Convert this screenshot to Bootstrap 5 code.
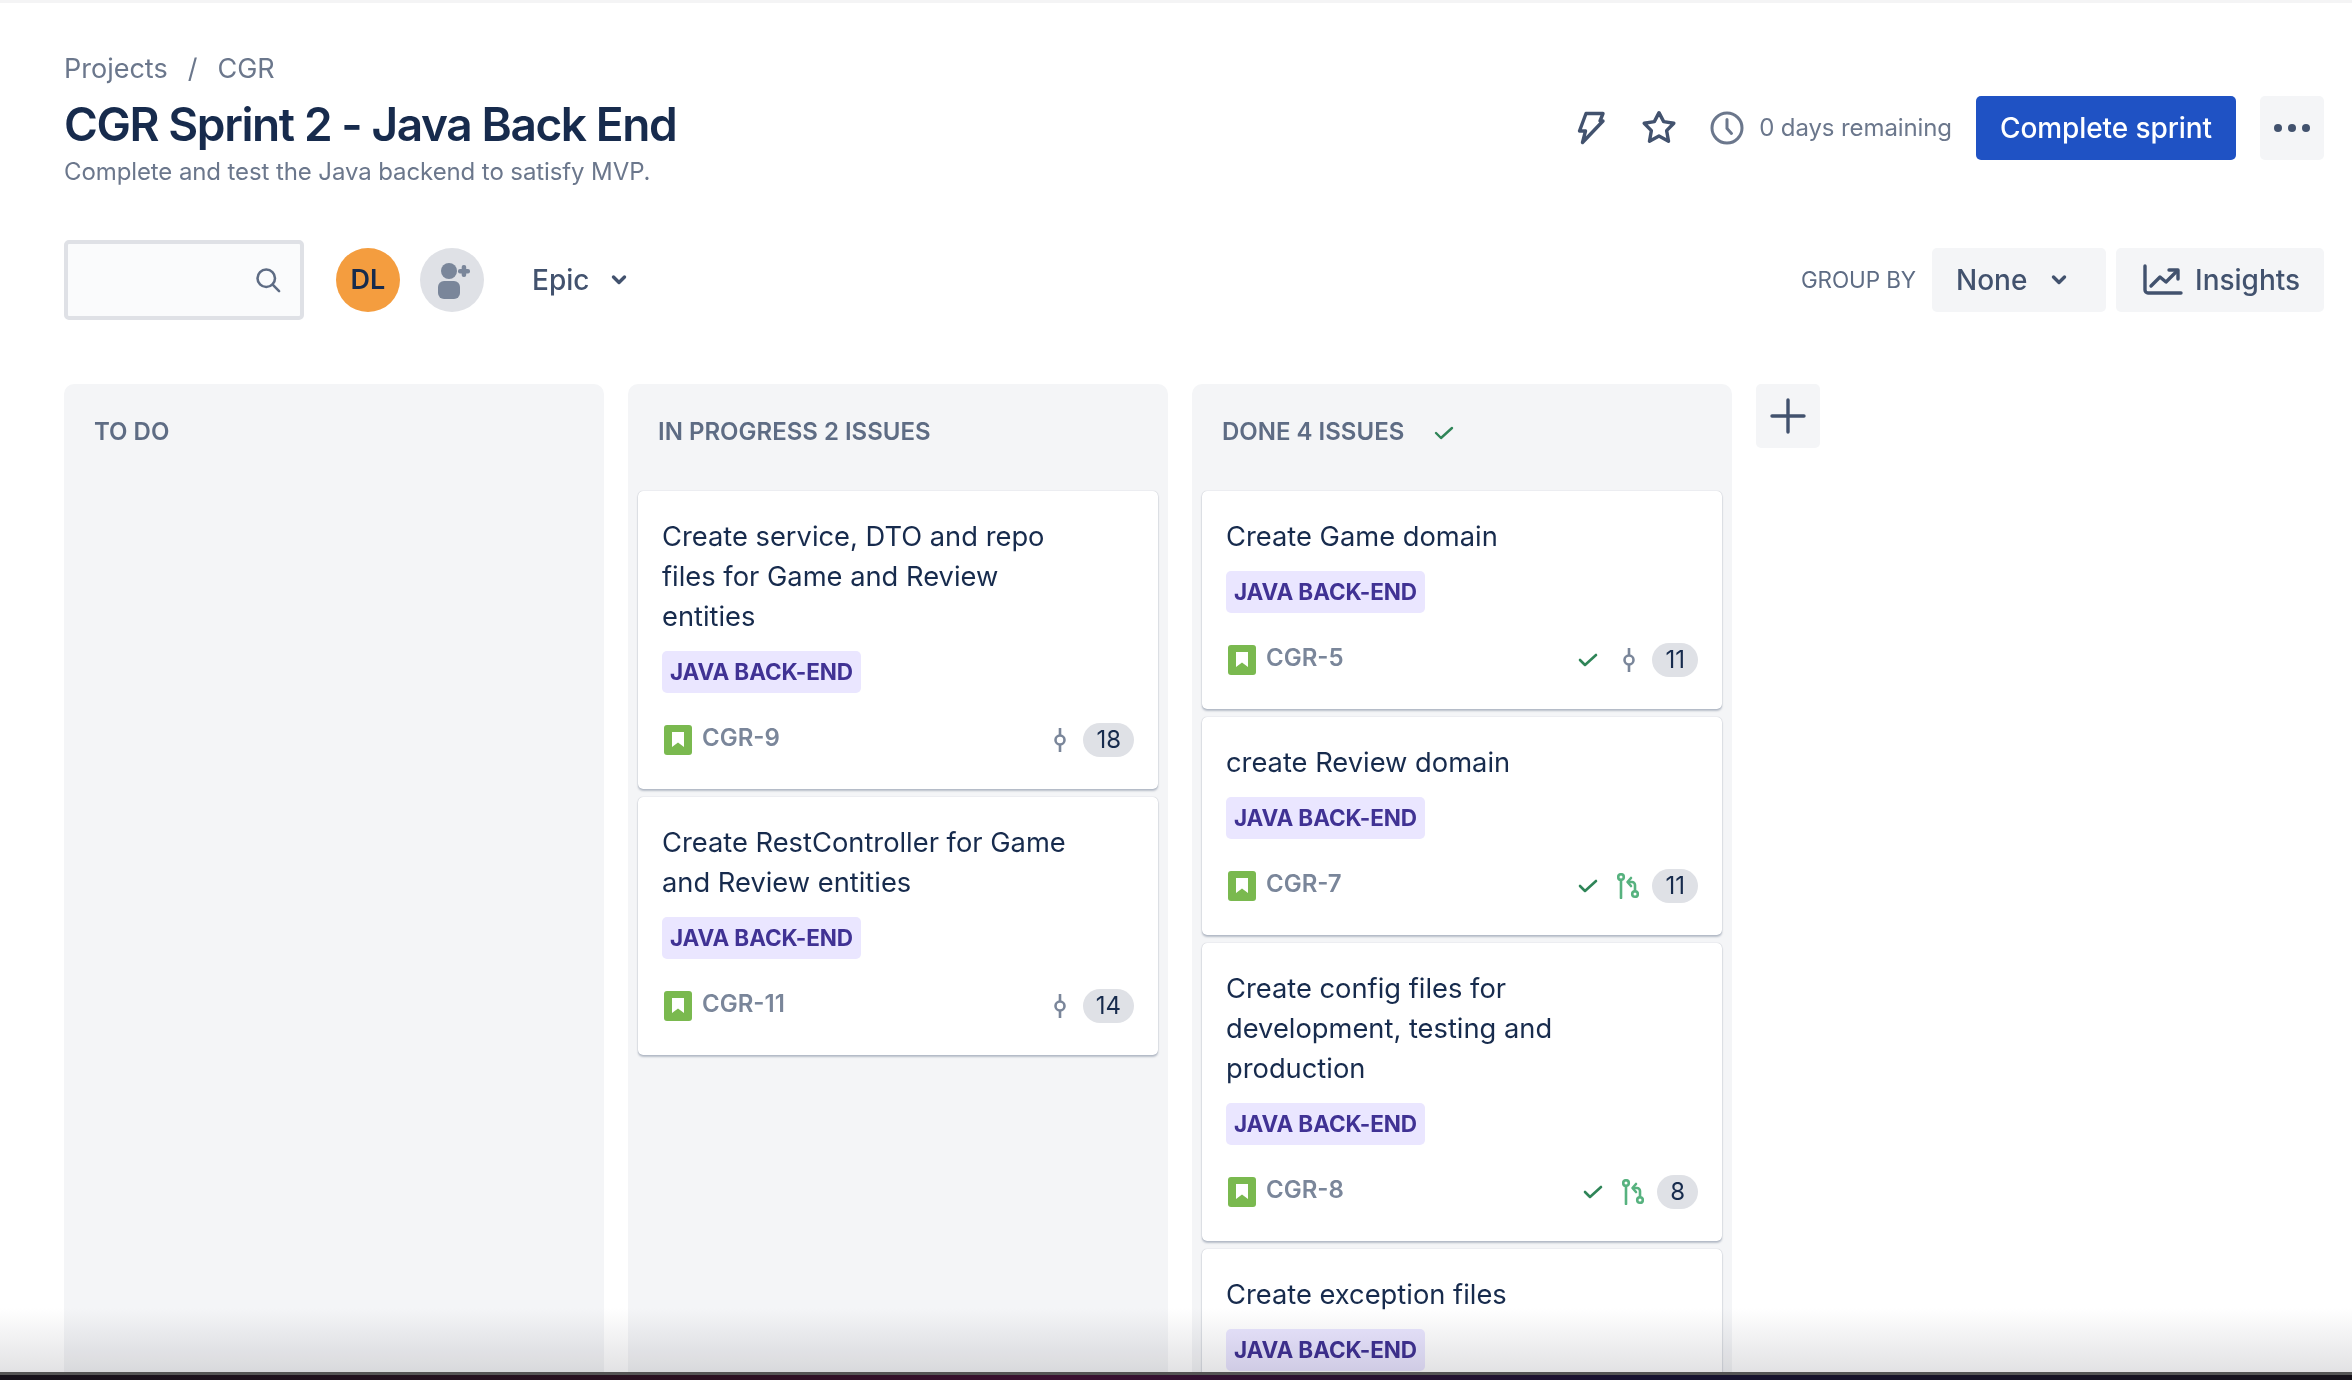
<!DOCTYPE html>
<html lang="en">
<head>
    <meta charset="UTF-8">
    <title>CGR Sprint 2 - Java Back End</title>
    <link href="https://cdn.jsdelivr.net/npm/bootstrap@5.3.3/dist/css/bootstrap.min.css" rel="stylesheet">
    <style>
        html, body { height: 100%; overflow: hidden; }
        body { font-family: Inter, "Liberation Sans", sans-serif; color: #172b4d; background: #fff; }
        .page-wrap { height: 1380px; padding: 3px 28px 0 64px; overflow: hidden; }
        .top-strip { position: absolute; top: 0; left: 0; right: 0; height: 3px; background: #f4f4f5; }
        .crumbs { font-size: 27px; line-height: 36px; color: #6b778c; margin-top: 48px; }
        .crumbs span { margin: 0 20px; }
        .title-row { height: 63px; margin-top: 7px; }
        .sprint-title { font-size: 46px; line-height: 60px; font-weight: 600; letter-spacing: -1.4px; margin: 0; color: #172b4d; }
        .sprint-goal { font-size: 24px; line-height: 30px; color: #6b778c; letter-spacing: -.1px; }
        .head-actions { margin-top: -91px; height: 64px; }
        .head-icons { gap: 32px; }
        .days-left { font-size: 24px; color: #6b778c; margin-left: 14px; margin-right: 24px; letter-spacing: -.1px; }
        .btn-sprint { background: #1f52c4; color: #fff; font-size: 28px; font-weight: 500; height: 64px; width: 260px; border: 0; border-radius: 5px; padding: 0; letter-spacing: -.1px; }
        .btn-grey { background: #f4f5f7; color: #42526e; border: 0; border-radius: 5px; height: 64px; font-size: 28px; font-weight: 500; padding: 0; }
        .btn-more { width: 64px; margin-left: 24px; }
        .btn-none { width: 174px; padding-left: 24px; }
        .btn-insights { width: 208px; padding-left: 27px; margin-left: 10px; }
        .insights-mark { margin-right: 12px; }
        .toolbar { margin-top: 80px; height: 80px; }
        .search-box { width: 240px; height: 80px; border: 4px solid #dfe1e6; background: #fafbfc; border-radius: 5px; padding-right: 18px; }
        .avatar-dl { width: 64px; height: 64px; border-radius: 50%; background: #f49d3f; color: #172b4d; font-size: 27px; font-weight: 600; margin-left: 32px; }
        .avatar-add { width: 64px; height: 64px; border-radius: 50%; background: #dfe1e6; margin-left: 20px; }
        .epic-filter { font-size: 28px; font-weight: 500; color: #42526e; margin-left: 48px; gap: 22px; }
        .group-label { font-size: 22.5px; color: #5e6c84; margin-right: 16px; letter-spacing: -.1px; }
        .board { margin-top: 64px; gap: 24px; }
        .board-col { width: 540px; height: 1100px; background: #f4f5f7; border-radius: 10px 10px 0 0; padding: 0 10px; flex: none; }
        .col-head { height: 107px; padding: 30px 20px 0; font-size: 24px; line-height: 36px; font-weight: 600; color: #5e6c84; letter-spacing: 0; }
        .col-check { margin-left: 30px; margin-top: 11px; }
        .issue-card { background: #fff; border-radius: 5px; box-shadow: 0 2px 2px rgba(9,30,66,.25), 0 0 1px rgba(9,30,66,.31); padding: 26px 24px 32px; margin-bottom: 8px; border: 0; }
        .issue-title { font-size: 27.3px; line-height: 40px; color: #172b4d; padding-right: 60px; }
        .epic-tag { display: inline-block; background: #eae6ff; color: #403294; font-size: 22.5px; font-weight: 700; line-height: 42px; height: 42px; padding: 0 8px; border-radius: 5px; margin-top: 14px; letter-spacing: -.1px; }
        .issue-foot { height: 34px; margin-top: 30px; }
        .story-mark { margin-left: 2px; }
        .issue-key { font-size: 24px; font-weight: 600; color: #7a869a; margin-left: 10px; position: relative; top: -2px; }
        .done-check { margin-left: auto; margin-right: 19px; }
        .pr-mark { margin-right: 13px; }
        .story-pts { background: #dfe1e6; color: #172b4d; font-size: 24px; border-radius: 17px; height: 34px; min-width: 39px; padding: 0 13px; line-height: 34px; text-align: center; }
        .add-col { width: 64px; height: 64px; background: #f4f5f7; border-radius: 5px; flex: none; }
        .bottom-fade { position: absolute; left: 0; right: 0; bottom: 8px; height: 64px; background: linear-gradient(to bottom, #fff, #e2e2e4); mix-blend-mode: multiply; }
        .dock-edge { position: absolute; left: 0; right: 0; bottom: 0; height: 8px; background: linear-gradient(to right, #16121a 0, #2a1020 30%, #3a1030 45%, #161230 70%, #16121a 100%); border-top: 3px solid #555; }
    </style>
</head>
<body>
<div class="top-strip"></div>
<div class="page-wrap">
    <div class="crumbs">Projects<span>/</span>CGR</div>
    <div class="title-row"><h1 class="sprint-title">CGR Sprint 2 - Java Back End</h1></div>
    <div class="sprint-goal">Complete and test the Java backend to satisfy MVP.</div>

    <div class="head-actions d-flex justify-content-end align-items-center">
        <div class="head-icons d-flex align-items-center">
            <svg width="36" height="36" viewBox="0 0 36 36" fill="none" stroke="#42526e" stroke-width="3.4" stroke-linejoin="round"><path d="M13 3.500H30L27 11H30L9.500 32.500L12.500 21H6.500Z"/></svg>
            <svg width="36" height="36" viewBox="1 1 34 34" fill="none" stroke="#42526e" stroke-width="3.2" stroke-linejoin="round"><path d="M18 3.500L22.400 12L32 13.500L25.200 20.500L27 30.500L18 25.500L9 30.500L10.800 20.500L4 13.500L13.600 12Z"/></svg>
            <svg width="36" height="36" viewBox="0 0 36 36" fill="none" stroke="#6b778c" stroke-width="3" stroke-linecap="round"><circle cx="18" cy="18" r="15"/><path d="M18 9.500v9l4.500 5"/></svg>
        </div>
        <span class="days-left">0 days remaining</span>
        <button class="btn btn-sprint">Complete sprint</button>
        <button class="btn btn-grey btn-more d-flex align-items-center justify-content-center">
            <svg width="38" height="10" viewBox="0 0 38 10" fill="#42526e"><circle cx="5" cy="5" r="4"/><circle cx="19" cy="5" r="4"/><circle cx="33" cy="5" r="4"/></svg>
        </button>
    </div>

    <div class="toolbar d-flex align-items-center">
        <div class="search-box d-flex align-items-center justify-content-end">
            <svg width="28" height="28" viewBox="0 0 24 24" fill="none" stroke="#5e6c84" stroke-width="2.2" stroke-linecap="round"><circle cx="10.500" cy="10.500" r="7.500"/><path d="M16 16l5.500 5.500"/></svg>
        </div>
        <div class="avatar-dl d-flex align-items-center justify-content-center">DL</div>
        <div class="avatar-add d-flex align-items-center justify-content-center">
            <svg width="40" height="40" viewBox="0 0 40 40" fill="#7a869a"><circle cx="17" cy="11" r="8"/><rect x="6" y="21" width="22" height="18" rx="6"/><rect x="26" y="9" width="12" height="4.500" rx="2"/><rect x="29.700" y="5" width="4.500" height="12" rx="2"/></svg>
        </div>
        <div class="epic-filter d-flex align-items-center">Epic
            <svg width="16" height="12" viewBox="0 0 16 12" fill="none" stroke="#42526e" stroke-width="3.4" stroke-linecap="round" stroke-linejoin="round"><path d="M2.500 3l5.500 5.500L13.500 3"/></svg>
        </div>
        <div class="ms-auto d-flex align-items-center">
            <span class="group-label">GROUP BY</span>
            <button class="btn btn-grey btn-none d-flex align-items-center">None
                <svg width="16" height="12" viewBox="0 0 16 12" fill="none" stroke="#42526e" stroke-width="3.4" stroke-linecap="round" stroke-linejoin="round" class="ms-4"><path d="M2.500 3l5.500 5.500L13.500 3"/></svg>
            </button>
            <button class="btn btn-grey btn-insights d-flex align-items-center">
                <svg width="40" height="32" viewBox="0 0 40 32" fill="none" stroke="#42526e" stroke-width="3.4" stroke-linecap="round" stroke-linejoin="round" class="insights-mark"><path d="M2 2v24a3 3 0 0 0 3 3h33"/><path d="M8 22l9-9 6 5 11-11"/><path d="M26 6h9v9"/></svg>
                Insights
            </button>
        </div>
    </div>

    <div class="board d-flex align-items-start">
        <div class="board-col">
            <div class="col-head">TO DO</div>
        </div>

        <div class="board-col">
            <div class="col-head">IN PROGRESS 2 ISSUES</div>
            <div class="issue-card">
                <div class="issue-title">Create service, DTO and repo files for Game and Review entities</div>
                <span class="epic-tag">JAVA BACK-END</span>
                <div class="issue-foot d-flex align-items-center">
                    <svg class="story-mark" width="28" height="30" viewBox="0 0 28 30"><rect width="28" height="30" rx="3" fill="#7ab94f"/><path d="M8 7h12v15l-6-4.500L8 22z" fill="#fff"/></svg>
                    <span class="issue-key">CGR-9</span>
                    <svg width="14" height="26" viewBox="0 0 14 26" fill="none" stroke="#7a869a" stroke-width="2.6" class="ms-auto me-3"><path d="M7 1v7M7 18v7"/><circle cx="7" cy="13" r="4.500"/></svg>
                    <span class="story-pts">18</span>
                </div>
            </div>
            <div class="issue-card">
                <div class="issue-title">Create RestController for Game and Review entities</div>
                <span class="epic-tag">JAVA BACK-END</span>
                <div class="issue-foot d-flex align-items-center">
                    <svg class="story-mark" width="28" height="30" viewBox="0 0 28 30"><rect width="28" height="30" rx="3" fill="#7ab94f"/><path d="M8 7h12v15l-6-4.500L8 22z" fill="#fff"/></svg>
                    <span class="issue-key">CGR-11</span>
                    <svg width="14" height="26" viewBox="0 0 14 26" fill="none" stroke="#7a869a" stroke-width="2.6" class="ms-auto me-3"><path d="M7 1v7M7 18v7"/><circle cx="7" cy="13" r="4.500"/></svg>
                    <span class="story-pts">14</span>
                </div>
            </div>
        </div>

        <div class="board-col">
            <div class="col-head d-flex align-items-start">DONE 4 ISSUES
                <svg width="20" height="16" viewBox="0 0 20 16" fill="none" stroke="#2f8558" stroke-width="2.4" stroke-linecap="round" stroke-linejoin="round" class="col-check"><path d="M2 8l5 5L18 3"/></svg>
            </div>
            <div class="issue-card">
                <div class="issue-title">Create Game domain</div>
                <span class="epic-tag">JAVA BACK-END</span>
                <div class="issue-foot d-flex align-items-center">
                    <svg class="story-mark" width="28" height="30" viewBox="0 0 28 30"><rect width="28" height="30" rx="3" fill="#7ab94f"/><path d="M8 7h12v15l-6-4.500L8 22z" fill="#fff"/></svg>
                    <span class="issue-key">CGR-5</span>
                    <svg width="20" height="16" viewBox="0 0 20 16" fill="none" stroke="#2f8558" stroke-width="2.6" stroke-linecap="round" stroke-linejoin="round" class="ms-auto me-4"><path d="M2 8l5 5L18 3"/></svg>
                    <svg width="14" height="26" viewBox="0 0 14 26" fill="none" stroke="#7a869a" stroke-width="2.6" class="me-3"><path d="M7 1v7M7 18v7"/><circle cx="7" cy="13" r="4.500"/></svg>
                    <span class="story-pts">11</span>
                </div>
            </div>
            <div class="issue-card">
                <div class="issue-title">create Review domain</div>
                <span class="epic-tag">JAVA BACK-END</span>
                <div class="issue-foot d-flex align-items-center">
                    <svg class="story-mark" width="28" height="30" viewBox="0 0 28 30"><rect width="28" height="30" rx="3" fill="#7ab94f"/><path d="M8 7h12v15l-6-4.500L8 22z" fill="#fff"/></svg>
                    <span class="issue-key">CGR-7</span>
                    <svg width="20" height="16" viewBox="0 0 20 16" fill="none" stroke="#2f8558" stroke-width="2.6" stroke-linecap="round" stroke-linejoin="round" class="done-check"><path d="M2 8l5 5L18 3"/></svg>
                    <svg width="22" height="26" viewBox="0 0 22 26" fill="none" stroke="#57b27f" stroke-width="2.6" stroke-linecap="round" stroke-linejoin="round" class="pr-mark"><circle cx="4" cy="4" r="2.800"/><path d="M4 7v18"/><circle cx="18" cy="21" r="2.800"/><path d="M18 18v-6a3 3 0 0 0-3-3h-3"/><path d="M14 5l-3.500 4 3.500 4"/></svg>
                    <span class="story-pts">11</span>
                </div>
            </div>
            <div class="issue-card">
                <div class="issue-title">Create config files for development, testing and production</div>
                <span class="epic-tag">JAVA BACK-END</span>
                <div class="issue-foot d-flex align-items-center">
                    <svg class="story-mark" width="28" height="30" viewBox="0 0 28 30"><rect width="28" height="30" rx="3" fill="#7ab94f"/><path d="M8 7h12v15l-6-4.500L8 22z" fill="#fff"/></svg>
                    <span class="issue-key">CGR-8</span>
                    <svg width="20" height="16" viewBox="0 0 20 16" fill="none" stroke="#2f8558" stroke-width="2.6" stroke-linecap="round" stroke-linejoin="round" class="done-check"><path d="M2 8l5 5L18 3"/></svg>
                    <svg width="22" height="26" viewBox="0 0 22 26" fill="none" stroke="#57b27f" stroke-width="2.6" stroke-linecap="round" stroke-linejoin="round" class="pr-mark"><circle cx="4" cy="4" r="2.800"/><path d="M4 7v18"/><circle cx="18" cy="21" r="2.800"/><path d="M18 18v-6a3 3 0 0 0-3-3h-3"/><path d="M14 5l-3.500 4 3.500 4"/></svg>
                    <span class="story-pts">8</span>
                </div>
            </div>
            <div class="issue-card">
                <div class="issue-title">Create exception files</div>
                <span class="epic-tag">JAVA BACK-END</span>
            </div>
        </div>

        <div class="add-col d-flex align-items-center justify-content-center">
            <svg width="36" height="36" viewBox="0 0 36 36" stroke="#42526e" stroke-width="3.4" stroke-linecap="round"><path d="M18 2v32M2 18h32"/></svg>
        </div>
    </div>
</div>
<div class="bottom-fade"></div>
<div class="dock-edge"></div>
<script src="https://cdn.jsdelivr.net/npm/bootstrap@5.3.3/dist/js/bootstrap.bundle.min.js"></script>
</body>
</html>
